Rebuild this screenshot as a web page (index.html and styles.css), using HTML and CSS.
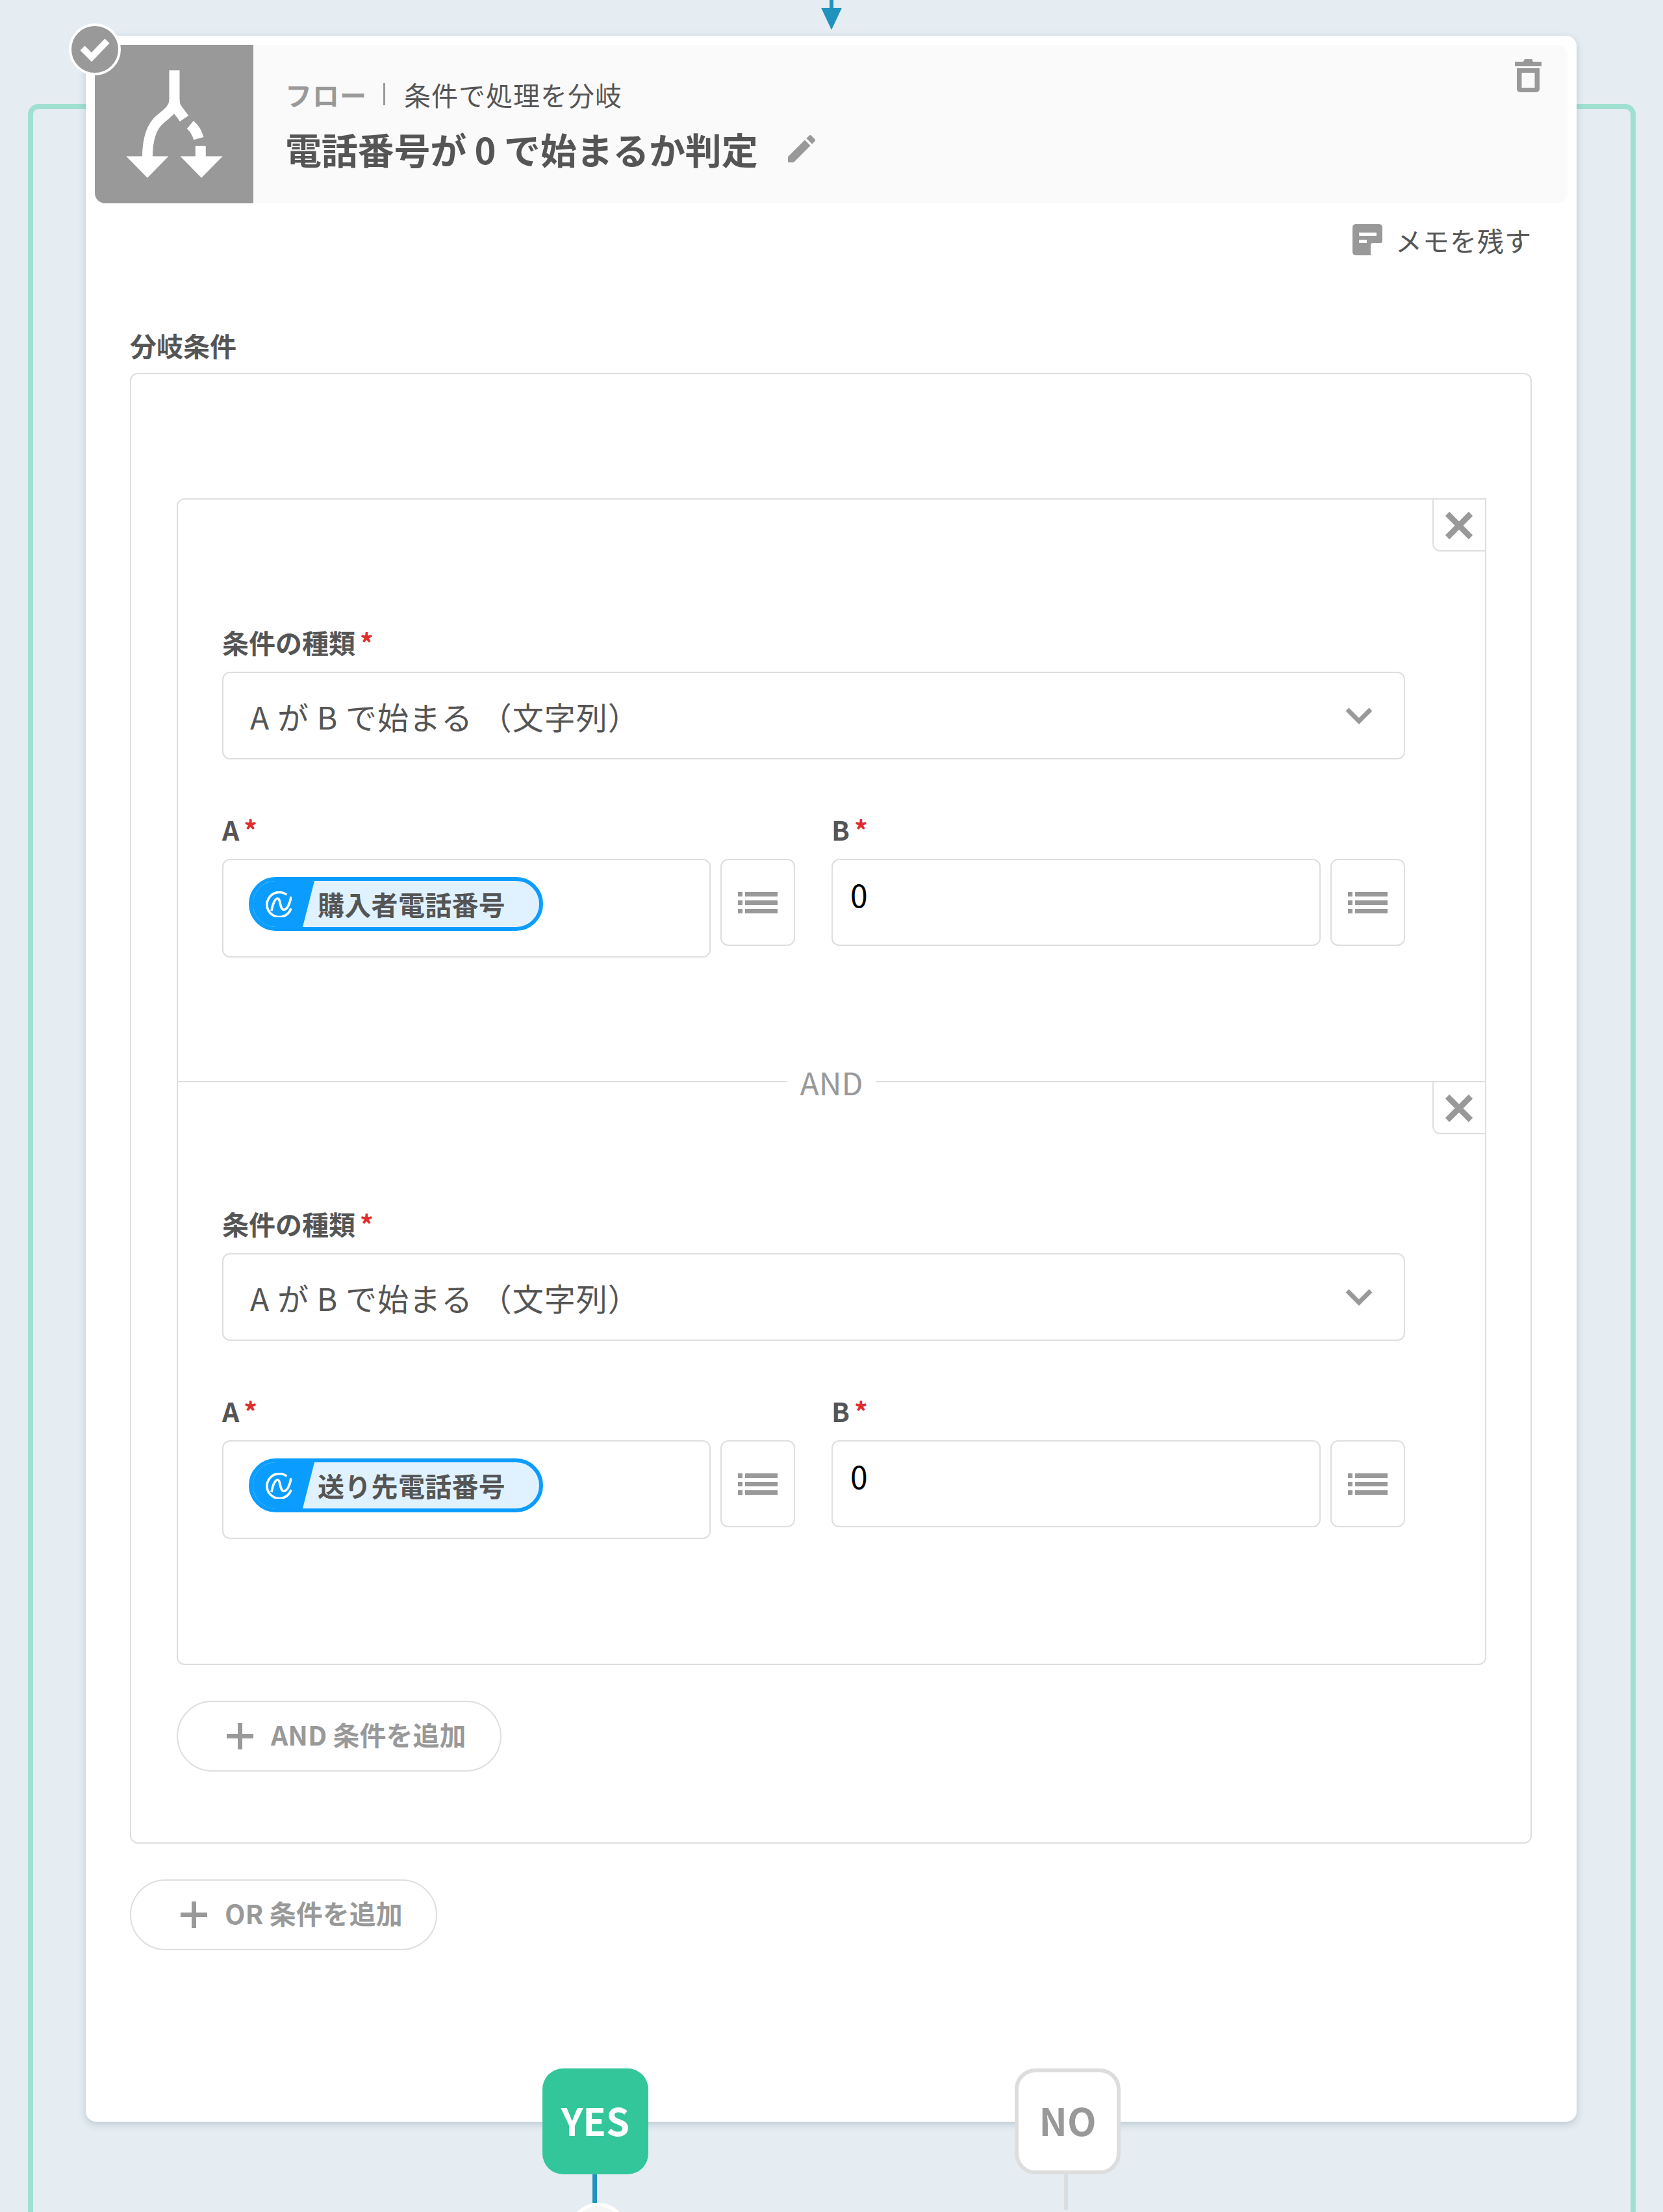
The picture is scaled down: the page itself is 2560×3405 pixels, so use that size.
FILE: index.html
```html
<!DOCTYPE html>
<html lang="ja">
<head>
    <meta charset="UTF-8">
    <meta name="viewport" content="width=device-width, initial-scale=1.0">
    <title>電話番号が 0 で始まるか判定</title>
    <link rel="stylesheet" href="styles.css">
</head>
<body>
    <svg class="symbols" width="0" height="0">
        <symbol id="icon-list" viewBox="0 0 61 33">
            <path d="M0 0h7v7H0zM11 0h50v7H11zM0 13h7v7H0zM11 13h50v7H11zM0 26h7v7H0zM11 26h50v7H11z" fill="#999"/>
        </symbol>
        <symbol id="icon-close" viewBox="0 0 44 44">
            <path d="M4 4l36 36M40 4L4 40" stroke="#999" stroke-width="9" fill="none"/>
        </symbol>
        <symbol id="icon-chevron" viewBox="0 0 42 26">
            <path d="M3 3l18 18L39 3" stroke="#999" stroke-width="7" fill="none"/>
        </symbol>
        <symbol id="icon-plus" viewBox="0 0 41 41">
            <path d="M17 0h7v17h17v7H24v17h-7V24H0v-7h17z" fill="#999"/>
        </symbol>
        <symbol id="icon-swirl" viewBox="205 153 120 120">
            <g fill="none" stroke="#fff" stroke-width="11">
                <path d="M302 169A57 57 0 1 0 322 232"/>
                <path d="M232 243C236 215 248 186 260 186C274 186 270 238 288 238C306 238 318 205 322 178"/>
            </g>
        </symbol>
    </svg>

    <div class="flow-in">
        <svg width="32" height="46" viewBox="0 0 32 46">
            <path d="M13 0h6v12h13L16 46 0 12h13z" fill="#1f93bb"/>
        </svg>
    </div>

    <div class="branch-frame">
        <div class="card">
            <span class="done-badge">
                <svg width="46" height="38" viewBox="0 0 46 38">
                    <path d="M4 17l14 14L42 6" stroke="#fff" stroke-width="10" fill="none"/>
                </svg>
            </span>

            <header class="card-head">
                <div class="head-icon">
                    <svg width="244" height="244" viewBox="167 147 733 733">
                        <g fill="none" stroke="#fff" stroke-width="48">
                            <path d="M535 265V400C535 440 505 462 470 490C425 526 410 590 410 670"/>
                            <path d="M535 400C535 440 555 450 580 488"/>
                            <path d="M608 517C630 535 640 555 647 580"/>
                            <path d="M656 615V670"/>
                        </g>
                        <path d="M312 662H508L410 762zM562 662H758L660 762z" fill="#fff"/>
                    </svg>
                </div>
                <div class="head-text">
                    <div class="crumb"><span class="crumb-cat">フロー</span><span class="crumb-sep"></span><span>条件で処理を分岐</span></div>
                    <div class="title">
                        <span>電話番号が 0 で始まるか判定</span>
                        <svg class="pencil" width="44" height="42" viewBox="3 3 18 18">
                            <path d="M3 17.25V21h3.75L17.81 9.94l-3.75-3.75L3 17.25zM20.71 7.04c.39-.39.39-1.02 0-1.41l-2.34-2.34c-.39-.39-1.02-.39-1.41 0l-1.83 1.83 3.75 3.75 1.83-1.83z" fill="#999"/>
                        </svg>
                    </div>
                </div>
                <svg class="trash" width="41" height="51" viewBox="0 0 41 51">
                    <path d="M0 4h13l2-4h11l2 4h13v7H0z" fill="#999"/>
                    <path fill-rule="evenodd" d="M3 14h35v32a5 5 0 0 1-5 5H8a5 5 0 0 1-5-5zM10.500 21v23h20V21z" fill="#999"/>
                </svg>
            </header>

            <div class="card-body">
                <div class="memo">
                    <svg width="46" height="48" viewBox="0 0 46 48">
                        <path d="M5 0h36a5 5 0 0 1 5 5v22L28 48H5a5 5 0 0 1-5-5V5a5 5 0 0 1 5-5z" fill="#999"/>
                        <path d="M10 13h27v5H10zM10 24h12v5H10zM46 29l-18 19V33a4 4 0 0 1 4-4z" fill="#fff"/>
                    </svg>
                    <span>メモを残す</span>
                </div>

                <div class="section-label">分岐条件</div>
                <div class="or-box">
                    <div class="cond-list">
                        <section class="cond">
                            <button class="cond-close"><svg width="44" height="44"><use href="#icon-close"/></svg></button>
                            <label class="field-label">条件の種類<span class="req">*</span></label>
                            <div class="select">
                                <span>A が B で始まる （文字列）</span>
                                <svg width="42" height="26"><use href="#icon-chevron"/></svg>
                            </div>
                            <div class="field-row">
                                <div>
                                    <label class="field-label">A<span class="req">*</span></label>
                                    <div class="field-inner">
                                        <div class="value-box">
                                            <span class="pill">
                                                <span class="pill-head"><svg width="40" height="40"><use href="#icon-swirl"/></svg></span>
                                                <span class="pill-text">購入者電話番号</span>
                                            </span>
                                        </div>
                                        <button class="list-btn"><svg width="61" height="33"><use href="#icon-list"/></svg></button>
                                    </div>
                                </div>
                                <div>
                                    <label class="field-label">B<span class="req">*</span></label>
                                    <div class="field-inner">
                                        <input class="text-input" type="text" value="0">
                                        <button class="list-btn"><svg width="61" height="33"><use href="#icon-list"/></svg></button>
                                    </div>
                                </div>
                            </div>
                        </section>

                        <div class="and-sep"><span>AND</span></div>

                        <section class="cond cond-next">
                            <button class="cond-close"><svg width="44" height="44"><use href="#icon-close"/></svg></button>
                            <label class="field-label">条件の種類<span class="req">*</span></label>
                            <div class="select">
                                <span>A が B で始まる （文字列）</span>
                                <svg width="42" height="26"><use href="#icon-chevron"/></svg>
                            </div>
                            <div class="field-row">
                                <div>
                                    <label class="field-label">A<span class="req">*</span></label>
                                    <div class="field-inner">
                                        <div class="value-box">
                                            <span class="pill">
                                                <span class="pill-head"><svg width="40" height="40"><use href="#icon-swirl"/></svg></span>
                                                <span class="pill-text">送り先電話番号</span>
                                            </span>
                                        </div>
                                        <button class="list-btn"><svg width="61" height="33"><use href="#icon-list"/></svg></button>
                                    </div>
                                </div>
                                <div>
                                    <label class="field-label">B<span class="req">*</span></label>
                                    <div class="field-inner">
                                        <input class="text-input" type="text" value="0">
                                        <button class="list-btn"><svg width="61" height="33"><use href="#icon-list"/></svg></button>
                                    </div>
                                </div>
                            </div>
                        </section>
                    </div>

                    <button class="add-btn add-and"><svg width="41" height="41"><use href="#icon-plus"/></svg><span>AND 条件を追加</span></button>
                </div>

                <button class="add-btn add-or"><svg width="41" height="41"><use href="#icon-plus"/></svg><span>OR 条件を追加</span></button>
            </div>
        </div>

        <div class="branch-tags">
            <div class="tag tag-yes">YES</div>
            <div class="tag tag-no">NO</div>
        </div>
    </div>
</body>
</html>
```

FILE: styles.css
```css
* {
    box-sizing: border-box;
}
html, body {
    margin: 0;
    height: 3405px;
    overflow: hidden;
}
body {
    background: #e5edf3;
    color: #555;
    font-family: "Noto Sans CJK JP", "Noto Sans", sans-serif;
    font-size: 41px;
}
button {
    font: inherit;
    background: #fff;
    padding: 0;
    cursor: pointer;
}
svg {
    display: block;
}
.symbols {
    position: absolute;
}

.flow-in {
    display: flex;
    justify-content: center;
    height: 46px;
}

.branch-frame {
    position: relative;
    margin: 114px 42px 0 43px;
    height: 3300px;
    padding: 0 83px 0 81px;
    border: 8px solid #a0e0d0;
    border-bottom: 0;
    border-radius: 16px 16px 0 0;
}

.card {
    position: relative;
    margin-top: -113px;
    height: 3211px;
    padding: 14px 14px 0;
    background: #fff;
    border-radius: 16px;
    box-shadow: 0 4px 12px rgba(60, 90, 110, .25);
}
.done-badge {
    position: absolute;
    left: -26px;
    top: -19px;
    z-index: 2;
    display: flex;
    align-items: center;
    justify-content: center;
    width: 80px;
    height: 80px;
    background: #999;
    border: 4px solid #fff;
    border-radius: 50%;
}

.card-head {
    display: flex;
    height: 244px;
    background: #fafafa;
    border-radius: 0 16px 16px 16px;
}
.head-icon {
    width: 244px;
    background: #999;
    border-radius: 0 0 0 16px;
}
.head-text {
    flex: 1;
    padding: 46px 0 0 49px;
}
.crumb {
    display: flex;
    align-items: center;
    height: 60px;
    line-height: 60px;
    letter-spacing: 1px;
}
.crumb-cat {
    color: #999;
    font-weight: 700;
}
.crumb-sep {
    width: 3px;
    height: 34px;
    margin: 0 29px 0 25px;
    background: #999;
}
.title {
    display: flex;
    align-items: center;
    gap: 46px;
    margin-top: 14px;
    font-size: 56px;
    font-weight: 700;
    line-height: 80px;
    letter-spacing: -.2px;
}
.trash {
    margin: 22px 40px 0 0;
}

.card-body {
    padding: 0 55px 0 54px;
}
.memo {
    display: flex;
    justify-content: flex-end;
    align-items: center;
    gap: 20px;
    height: 48px;
    margin-top: 32px;
    letter-spacing: 1px;
}
.section-label {
    margin-top: 108px;
    line-height: 60px;
    font-weight: 700;
}
.or-box {
    margin-top: 13px;
    padding: 191px 68px 109px 70px;
    border: 2px solid #dedede;
    border-radius: 12px;
}
.cond-list {
    border: 2px solid #dedede;
    border-radius: 12px;
}
.cond {
    position: relative;
    height: 895px;
    padding: 189px 123px 0 68px;
}
.cond-next {
    padding-top: 187px;
}
.cond-close {
    position: absolute;
    top: -2px;
    right: -2px;
    display: flex;
    align-items: center;
    justify-content: center;
    width: 83px;
    height: 82px;
    padding: 2px 2px 0 0;
    border: 2px solid #dedede;
    border-radius: 0 0 0 12px;
}
.and-sep {
    display: flex;
    justify-content: center;
    height: 2px;
    background: #dedede;
    line-height: 2px;
    font-size: 48px;
}
.and-sep span {
    padding: 0 20px;
    background: #fff;
    color: #999;
}
.field-label {
    display: block;
    margin-bottom: 16px;
    line-height: 60px;
    font-weight: 700;
}
.req {
    margin-left: 7px;
    color: #e02d2d;
}
.select {
    display: flex;
    justify-content: space-between;
    align-items: center;
    height: 135px;
    padding: 0 48px 0 41px;
    border: 2px solid #dedede;
    border-radius: 12px;
    font-size: 48px;
    letter-spacing: 1px;
}
.field-row {
    display: grid;
    grid-template-columns: 882px 883px;
    gap: 56px;
    margin-top: 77px;
}
.field-inner {
    display: flex;
    align-items: flex-start;
    gap: 15px;
}
.value-box {
    flex: 1;
    height: 152px;
    padding: 26px 0 0 39px;
    border: 2px solid #dedede;
    border-radius: 12px;
}
.text-input {
    flex: 1;
    min-width: 0;
    height: 134px;
    padding: 0 27px 26px;
    border: 2px solid #dedede;
    border-radius: 12px;
    color: #000;
    font: inherit;
    font-size: 48px;
    outline: none;
}
.list-btn {
    display: flex;
    align-items: center;
    justify-content: center;
    flex: none;
    width: 115px;
    height: 134px;
    border: 2px solid #dedede;
    border-radius: 12px;
}
.pill {
    display: inline-flex;
    height: 83px;
    background: #e0f2ff;
    border: 6px solid #0a9dff;
    border-radius: 42px;
    overflow: hidden;
}
.pill-head {
    display: flex;
    align-items: center;
    width: 95px;
    padding-left: 20px;
    background: #0a9dff;
    clip-path: polygon(0 0, 100% 0, 81% 100%, 0 100%);
}
.pill-text {
    padding: 0 52px 0 5px;
    font-weight: 700;
    line-height: 71px;
    letter-spacing: .3px;
}
.add-btn {
    display: flex;
    align-items: center;
    gap: 27px;
    height: 109px;
    border: 2px solid #dedede;
    border-radius: 55px;
    color: #999;
    font-weight: 700;
}
.add-btn span {
    padding-bottom: 8px;
}
.add-and {
    width: 500px;
    margin-top: 55px;
    padding-left: 75px;
}
.add-or {
    width: 473px;
    margin-top: 55px;
    padding-left: 76px;
}

.branch-tags {
    position: relative;
    display: flex;
    gap: 564px;
    margin-top: -82px;
    padding-left: 703px;
}
.tag {
    position: relative;
    display: flex;
    align-items: center;
    justify-content: center;
    width: 163px;
    height: 163px;
    padding-bottom: 5px;
    border-radius: 32px;
    font-size: 58px;
    font-weight: 700;
}
.tag-yes {
    background: #33c69b;
    color: #fff;
}
.tag-yes::after {
    content: "";
    position: absolute;
    top: 100%;
    left: 77px;
    width: 7px;
    height: 44px;
    background: #1f93bb;
}
.tag-yes::before {
    content: "";
    position: absolute;
    top: 207px;
    left: 41px;
    width: 80px;
    height: 80px;
    background: #f5f5f5;
    border: 5px solid #fff;
    border-radius: 50%;
}
.tag-no {
    background: #fff;
    border: 6px solid #ddd;
    color: #999;
}
.tag-no::after {
    content: "";
    position: absolute;
    top: 100%;
    left: 70px;
    width: 6px;
    height: 61px;
    background: #ddd;
}
```
